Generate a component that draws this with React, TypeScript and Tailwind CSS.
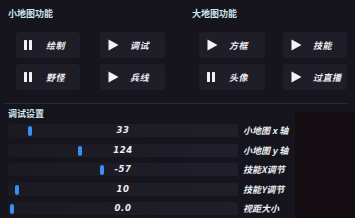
import React from "react";

const cjk = { fontFamily: '"Noto Sans CJK SC", "Noto Sans", sans-serif' };

function PauseIcon() {
  return (
    <div className="flex gap-[1.5px] h-[10px]">
      <div className="w-[3px] h-full bg-[#f2f2f5] rounded-[0.5px]" />
      <div className="w-[3px] h-full bg-[#f2f2f5] rounded-[0.5px]" />
    </div>
  );
}

function PlayIcon() {
  return (
    <svg width="11" height="12" viewBox="0 0 11 12">
      <path d="M0.5 0.5 L10.5 6 L0.5 11.5 Z" fill="#f4f4f7" />
    </svg>
  );
}

function Btn({ label, play }: { label: string; play?: boolean }) {
  return (
    <div className="h-[26px] rounded-[4px] bg-[#1f1e28] flex items-center pl-[8px]">
      <div className="w-[22px] flex items-center">{play ? <PlayIcon /> : <PauseIcon />}</div>
      <span
        className="text-[9px] leading-none font-bold italic text-[#ececf1] tracking-[0.5px]"
        style={cjk}
      >
        {label}
      </span>
    </div>
  );
}

const rows = [
  { v: "33", pos: 22, label: "小地图 x 轴" },
  { v: "124", pos: 72, label: "小地图 y 轴" },
  { v: "-57", pos: 94, label: "技能X调节" },
  { v: "10", pos: 9, label: "技能Y调节" },
  { v: "0.0", pos: 4, label: "视距大小" },
];

export default function App() {
  return (
    <div className="w-[355px] h-[218px] bg-[#16151e] overflow-hidden flex flex-col">
      <div className="flex h-[103px]">
        <div className="w-[184px] pl-[8px] pt-[9px]">
          <div className="h-[10px] text-[9px] leading-[10px] font-bold text-[#cfe5ef]" style={cjk}>
            小地图功能
          </div>
          <div className="mt-[13px] ml-[8px] grid grid-cols-[64px_65px] gap-x-[20px] gap-y-[6px]">
            <Btn label="绘制" />
            <Btn label="调试" play />
            <Btn label="野怪" />
            <Btn label="兵线" play />
          </div>
        </div>
        <div className="flex-1 pl-[8px] pt-[9px]">
          <div className="h-[10px] text-[9px] leading-[10px] font-bold text-[#cfe5ef]" style={cjk}>
            大地图功能
          </div>
          <div className="mt-[13px] ml-[7px] grid grid-cols-[66px_64px] gap-x-[18px] gap-y-[6px]">
            <Btn label="方框" play />
            <Btn label="技能" play />
            <Btn label="头像" />
            <Btn label="过直播" play />
          </div>
        </div>
      </div>
      <div className="h-[1px] mx-[4px] mr-[7px] bg-[#2a2933]" />
      <div className="flex flex-1">
        <div className="w-[295px] pl-[8px] pt-[5px]">
          <div className="h-[10px] text-[9px] leading-[10px] font-bold text-[#cfe5ef]" style={cjk}>
            调试设置
          </div>
          <div className="mt-[5px] flex flex-col gap-[6.5px]">
            {rows.map((r) => (
              <div key={r.label} className="flex items-center h-[13px]">
                <div className="relative w-[230px] h-[13px] rounded-[2px] bg-gradient-to-r from-[#1b1a23] to-[#201f29] flex items-center justify-center">
                  <div
                    className="absolute top-[2px] w-[4px] h-[10px] rounded-full bg-[#3a8ff2]"
                    style={{ left: r.pos - 2 }}
                  />
                  <span
                    className="text-[8.5px] leading-none font-bold italic text-[#eeeef2] tracking-[0.6px]"
                    style={{ fontFamily: '"DejaVu Sans", sans-serif' }}
                  >
                    {r.v}
                  </span>
                </div>
                <span
                  className="ml-[5px] text-[9px] leading-none font-bold italic text-[#ececf1] whitespace-pre"
                  style={cjk}
                >
                  {r.label}
                </span>
              </div>
            ))}
          </div>
        </div>
        <div className="flex-1 mt-[8px] bg-[#140e13]" />
      </div>
    </div>
  );
}
